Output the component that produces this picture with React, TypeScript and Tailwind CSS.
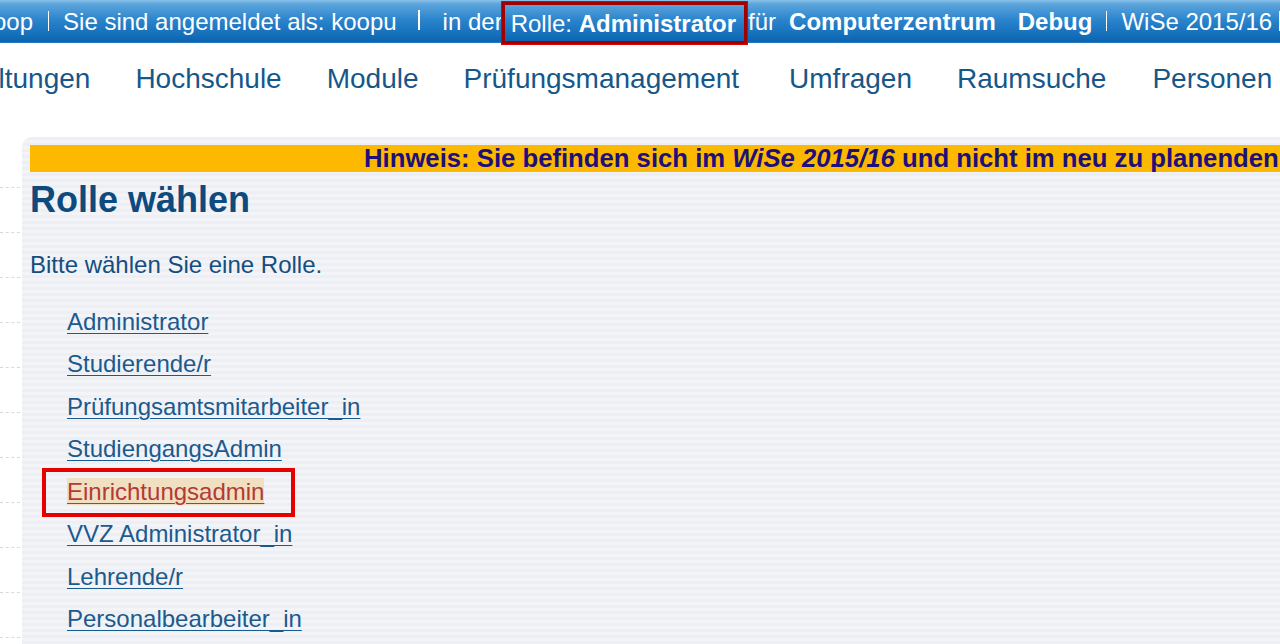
import React from "react";

const roles = [
  "Administrator",
  "Studierende/r",
  "Prüfungsamtsmitarbeiter_in",
  "StudiengangsAdmin",
  "Einrichtungsadmin",
  "VVZ Administrator_in",
  "Lehrende/r",
  "Personalbearbeiter_in",
];

export default function App() {
  return (
    <div className="w-[1280px] h-[644px] overflow-hidden bg-white font-['Liberation_Sans',Arial,sans-serif]">
      {/* top bar */}
      <div className="h-[43px] flex items-start whitespace-nowrap text-white text-[24px] leading-none bg-[linear-gradient(180deg,#8cc2ec_0px,#5da4dc_4px,#2a84cc_20px,#0b64b1_42px,#4a90d0_43px)]">
        <span className="ml-[-19px] mt-[10px]">koop</span>
        <span className="ml-[15px] mt-[11px] w-px h-[20px] bg-white shrink-0"></span>
        <span className="ml-[14px] mt-[10px]">Sie sind angemeldet als: koopu</span>
        <span className="ml-[21px] mt-[10px] w-[2px] h-[20px] bg-white shrink-0"></span>
        <span className="ml-[23px] mt-[10px]">in der</span>
        <span className="ml-[-1px] mt-[2px] h-[42px] border-[3px] border-[#a00000] flex items-center pl-[6px] pr-[8px] pt-[2px] shadow-[0_0_0_1px_#e00000]">
          <span>Rolle:&nbsp;</span>
          <span className="font-bold">Administrator</span>
        </span>
        <span className="ml-[1px] mt-[10px]">für</span>
        <span className="ml-[13px] mt-[10px] font-bold">Computerzentrum</span>
        <span className="ml-[22px] mt-[10px] font-bold">Debug</span>
        <span className="ml-[14px] mt-[11px] w-px h-[20px] bg-white shrink-0"></span>
        <span className="ml-[14px] mt-[10px]">WiSe 2015/16</span>
        <span className="ml-[7px] mt-[11px] w-[2px] h-[20px] bg-white shrink-0"></span>
      </div>

      {/* nav */}
      <div className="h-[70px] pt-[2px] flex items-center whitespace-nowrap text-[28px] text-[#16578a]">
        <span className="ml-[-112px]">Veranstaltungen</span>
        <span className="ml-[45px]">Hochschule</span>
        <span className="ml-[45px]">Module</span>
        <span className="ml-[45px]">Prüfungsmanagement</span>
        <span className="ml-[50px]">Umfragen</span>
        <span className="ml-[45px]">Raumsuche</span>
        <span className="ml-[46px]">Personen</span>
      </div>

      {/* content row */}
      <div className="mt-[24px] flex">
        <div className="w-[22px] shrink-0 pt-[6px] flex flex-col">
          {Array.from({ length: 11 }).map((_, i) => (
            <div key={i} className="h-[45px] w-[20px] border-b border-dashed border-[#d8d8d8]"></div>
          ))}
        </div>
        <div className="flex-1 min-w-0 h-[520px] rounded-tl-[10px] pl-[8px] pt-[8px] bg-[repeating-linear-gradient(180deg,#eeeff5_0px,#eeeff5_3px,#f3f4f8_3px,#f3f4f8_6px)]">
          <div className="h-[27px] bg-[#fdb900] overflow-hidden whitespace-nowrap text-[25.7px] leading-[27px] font-bold text-[#1d0f7c] pl-[334px]">
            Hinweis: Sie befinden sich im <i>WiSe 2015/16</i> und nicht im neu zu planenden Semester
          </div>
          <h1 className="mt-[10px] text-[36px] leading-none font-bold text-[#0d4a7e]">Rolle wählen</h1>
          <p className="mt-[35px] text-[24px] leading-none text-[#124e80]">Bitte wählen Sie eine Rolle.</p>
          <div className="mt-[23.5px]">
            {roles.map((r) => {
              const active = r === "Einrichtungsadmin";
              return (
                <div key={r} className="relative h-[42.5px] leading-[42.5px] text-[24px] pl-[37px]">
                  {active ? (
                    <>
                      <a className="underline underline-offset-[3px] decoration-1 text-[#b33a36] bg-[#f0dfc0]">{r}</a>
                      <div className="absolute left-[12px] top-[-3px] w-[253px] h-[49px] border-[4px] border-[#e60000]"></div>
                    </>
                  ) : (
                    <a className="underline underline-offset-[3px] decoration-1 text-[#1b5a8d]">{r}</a>
                  )}
                </div>
              );
            })}
          </div>
        </div>
      </div>
    </div>
  );
}
